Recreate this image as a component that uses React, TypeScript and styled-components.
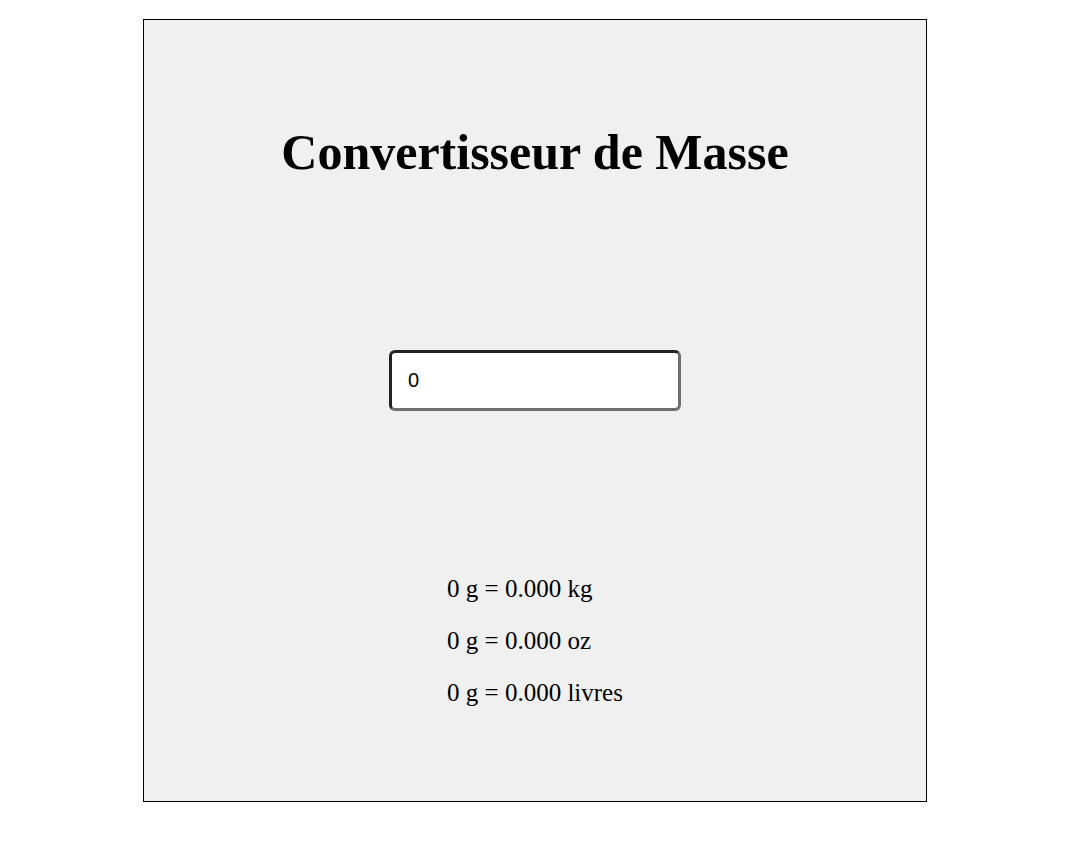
import React, { useState } from "react";
import styled, { createGlobalStyle } from "styled-components";

const Global = createGlobalStyle`
  html, body { margin: 0; padding: 0; background: #ffffff; }
  body { font-family: "Liberation Serif", "Times New Roman", serif; }
`;

const Page = styled.div`
  padding: 19px 0 0 143px;
`;

const Card = styled.main`
  box-sizing: border-box;
  width: 784px;
  height: 783px;
  border: 1px solid #000;
  background: #f0f0f0;
  display: flex;
  flex-direction: column;
  align-items: center;
`;

const Title = styled.h1`
  margin: 99px 0 0;
  font-family: "Liberation Serif", "Times New Roman", serif;
  font-weight: bold;
  font-size: 50px;
  line-height: 66px;
  color: #000;
`;

const Field = styled.input`
  box-sizing: border-box;
  margin-top: 165px;
  width: 292px;
  height: 61px;
  padding: 0 16px;
  border-style: solid;
  border-width: 3px;
  border-top-color: #222;
  border-left-color: #222;
  border-right-color: #6f6f6f;
  border-bottom-color: #6f6f6f;
  border-radius: 6px;
  background: #fff;
  font-family: "Liberation Sans", Arial, sans-serif;
  font-size: 20px;
  color: #000;
  outline: none;
`;

const Results = styled.div`
  margin-top: 164px;
  display: flex;
  flex-direction: column;
  gap: 24px;
`;

const Line = styled.p`
  margin: 0;
  font-family: "Liberation Serif", "Times New Roman", serif;
  font-size: 25px;
  line-height: 28px;
  color: #000;
`;

export default function App() {
  const [grams, setGrams] = useState("0");
  const g = parseFloat(grams) || 0;
  return (
    <>
      <Global />
      <Page>
        <Card>
          <Title>Convertisseur de Masse</Title>
          <Field type="number" value={grams} onChange={(e) => setGrams(e.target.value)} />
          <Results>
            <Line>{g} g = {(g / 1000).toFixed(3)} kg</Line>
            <Line>{g} g = {(g / 28.3495).toFixed(3)} oz</Line>
            <Line>{g} g = {(g / 453.592).toFixed(3)} livres</Line>
          </Results>
        </Card>
      </Page>
    </>
  );
}
